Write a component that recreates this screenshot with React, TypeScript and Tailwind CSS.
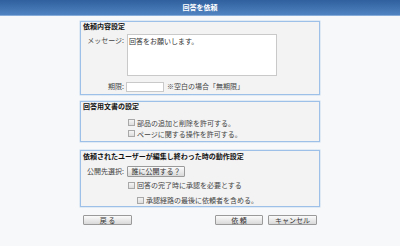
const font = { fontFamily: '"Noto Sans CJK JP", "Noto Sans", sans-serif' };

function Check({ label, indent }: { label: string; indent: string }) {
  return (
    <div className={`flex h-[10px] items-center ${indent}`}>
      <span className="mr-[2px] h-[7px] w-[7px] border border-[#a8a8a8] bg-gradient-to-b from-[#f4f4f4] to-[#dedede]" />
      <span className="leading-[10px] text-[#444]">{label}</span>
    </div>
  );
}

function Btn({ label, w }: { label: string; w: string }) {
  return (
    <button
      className={`flex h-[10px] ${w} items-center justify-center rounded-[1px] border border-[#9a9a9a] bg-gradient-to-b from-[#fbfbfb] to-[#d9d9d9] text-[7px] leading-[8px] text-[#333]`}
    >
      {label}
    </button>
  );
}

export default function App() {
  return (
    <div className="h-[246px] w-[400px] bg-[#f7f8f9] text-[7px]" style={font}>
      <div className="flex h-[16px] items-center justify-center border-b border-[#86acd9] bg-gradient-to-b from-[#30609e] to-[#5083c1] text-[7px] font-bold text-white">
        回答を依頼
      </div>

      <div className="mx-auto w-[240px]">
        {/* 依頼内容設定 */}
        <div className="mt-[5px] border border-[#9dc0e8] bg-[#f3f3f3] shadow-[0_0_0_0.5px_#c8dcf2]">
          <div className="h-[9px] pl-[2px] font-bold leading-[9px] text-[#111]">依頼内容設定</div>
          <div className="mt-[3px] flex">
            <div className="w-[43px] pt-[1px] text-right leading-[10px] text-[#444]">メッセージ:</div>
            <div className="ml-[3px] h-[42px] w-[150px] border border-[#c9c9c9] bg-white px-[1px] pt-[1px] leading-[10px] text-[#333]">
              回答をお願いします。
            </div>
          </div>
          <div className="mt-[5px] flex h-[11px] items-center">
            <div className="w-[43px] text-right text-[#444]">期限:</div>
            <div className="ml-[2px] h-[10px] w-[38px] border border-[#c9c9c9] bg-white" />
            <div className="ml-[3px] text-[#444]">※空白の場合「無期限」</div>
          </div>
          <div className="h-[2px]" />
        </div>

        {/* 回答用文書の設定 */}
        <div className="mt-[6px] border border-[#9dc0e8] bg-[#f3f3f3] shadow-[0_0_0_0.5px_#c8dcf2]">
          <div className="h-[9px] pl-[2px] font-bold leading-[9px] text-[#111]">回答用文書の設定</div>
          <div className="mt-[6px] flex flex-col">
            <div className="flex h-[11px] items-center">
              <Check label="部品の追加と削除を許可する。" indent="ml-[47px]" />
            </div>
            <div className="flex h-[11px] items-center">
              <Check label="ページに関する操作を許可する。" indent="ml-[47px]" />
            </div>
          </div>
          <div className="h-[2px]" />
        </div>

        {/* 動作設定 */}
        <div className="mt-[8px] border border-[#9dc0e8] bg-[#f3f3f3] pt-[1px] shadow-[0_0_0_0.5px_#c8dcf2]">
          <div className="h-[9px] pl-[2px] font-bold leading-[9px] text-[#111]">
            依頼されたユーザーが編集し終わった時の動作設定
          </div>
          <div className="mt-[5px] flex h-[11px] items-center">
            <div className="w-[43px] text-right text-[#444]">公開先選択:</div>
            <button className="ml-[3px] flex h-[11px] w-[58px] items-center justify-center rounded-[1px] border border-[#9a9a9a] bg-gradient-to-b from-[#fbfbfb] to-[#d9d9d9] text-[7px] text-[#333]">
              誰に公開する？
            </button>
          </div>
          <div className="mt-[3px]">
            <Check label="回答の完了時に承認を必要とする" indent="ml-[47px]" />
          </div>
          <div className="mt-[5px]">
            <Check label="承認経路の最後に依頼者を含める。" indent="ml-[56px]" />
          </div>
          <div className="h-[1px]" />
        </div>

        <div className="mt-[8px] flex items-center px-[3px]">
          <Btn label="戻 る" w="w-[49px]" />
          <div className="flex-1" />
          <Btn label="依 頼" w="w-[48px]" />
          <div className="w-[5px]" />
          <Btn label="キャンセル" w="w-[49px]" />
        </div>
      </div>
    </div>
  );
}
